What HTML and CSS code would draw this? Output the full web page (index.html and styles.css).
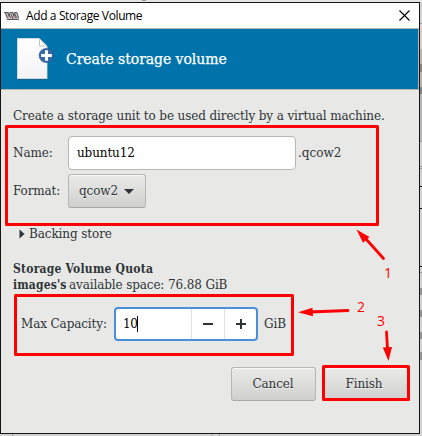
FILE: index.html
```html
<!DOCTYPE html>
<html lang="en">
<head>
<meta charset="utf-8">
<title>Add a Storage Volume</title>
<link rel="stylesheet" href="styles.css">
</head>
<body>
<svg class="backdrop" viewBox="0 0 422 436" aria-hidden="true">
  <rect width="422" height="436" fill="#d2d2d2"/>
  <rect width="422" height="2" fill="#e4e4e4"/>
  <rect x="142" y="0" width="4" height="1" fill="#999"/>
  <path d="M420 23.500h2M420 141.500h2M420 166.500h2M420 168.500h2M420 272.500h2M12.500 434v2M212 434v2M219.500 434v2" stroke="#999"/>
  <path d="M420 49h2v92h-2z" fill="#b4b4b4"/>
  <path d="M420 186.500h2M420 208.500h2M420 266.500h2" stroke="#111"/>
  <path d="M421 64v8M421 87v7M421 288v7M421 310v7M421 332v7M421 352v8" stroke="#555"/>
</svg>
<main class="window">
  <header class="titlebar">
    <svg class="app-icon" width="15" height="8" viewBox="0 0 15 8">
      <path d="M0 0h13l2 8H3z" fill="#bbb"/>
      <path d="M0 .5h4l1 4 1-4h3l1 4 1-4h2l2 6M3 7.500h12M1.500 1l2 5M7 2l2 5M10 1l3 5" fill="none" stroke="#555054" stroke-width=".9"/>
      <path d="M5 3l2 3M10 4l2 2" stroke="#955"/>
    </svg>
    <span class="window-title">Add a Storage Volume</span>
    <svg class="close" width="11" height="11" viewBox="0 0 11 11"><path d="M.5.5l10 10M10.500.5l-10 10" stroke="#000" stroke-width="1.100"/></svg>
  </header>
  <section class="banner">
    <svg class="doc-icon" width="40" height="44" viewBox="0 0 40 44">
      <defs><linearGradient id="paper" x2="0" y2="1"><stop stop-color="#fff"/><stop offset="1" stop-color="#f3f3f3"/></linearGradient></defs>
      <path d="M2 2.500h22l7 7V43H2z" fill="#16547c" opacity=".5"/>
      <path d="M1.500 1.500h22l7.500 7.500v32.500H1.500z" fill="url(#paper)" stroke="#e5e5e2" stroke-width=".8"/>
      <path d="M23.500 1.500v7.500H31z" fill="#fff" stroke="#b6b6b3" stroke-width=".8"/>
      <circle cx="30.200" cy="18.500" r="7.100" fill="#3b67a6" stroke="#2d5692" stroke-width=".6"/>
      <path d="M30.500 13.200v10.600M25.200 18.500h10.600" stroke="#fff" stroke-width="2.900"/>
    </svg>
    <h1>Create storage volume</h1>
  </section>
  <section class="content">
    <p class="description">Create a storage unit to be used directly by a virtual machine.</p>
    <div class="row name-row"><span class="name-label">Name:</span><div class="input"><span class="value">ubuntu12</span></div><span class="suffix">.qcow2</span></div>
    <div class="row format-row"><span class="format-label">Format:</span><div class="button select"><span class="option">qcow2</span><svg width="10" height="5" viewBox="0 0 10 5"><path d="M0 0h10L5 5z" fill="#2e3436"/></svg></div></div>
    <div class="expander"><svg width="6" height="10" viewBox="0 0 6 10"><path d="M.5.5L5.500 5 .5 9.500z" fill="#2e3436"/></svg><span>Backing store</span></div>
    <p class="quota">Storage Volume Quota</p>
    <p class="available"><b>images's</b><span>available space: 76.88 GiB</span></p>
    <div class="row capacity-row"><span class="capacity-label">Max Capacity:</span>
      <div class="spin"><div class="number"><span>10</span><i></i></div><div class="step minus"><svg width="12" height="12" viewBox="0 0 12 12"><path d="M1 6h10" stroke="#2e3436" stroke-width="2"/></svg></div><div class="step"><svg width="12" height="12" viewBox="0 0 12 12"><path d="M1 6h10M6 1v10" stroke="#2e3436" stroke-width="2"/></svg></div></div><span class="unit">GiB</span></div>
    <footer><div class="button action"><span>Cancel</span></div><div class="button action finish"><span>Finish</span></div></footer>
  </section>
</main>
<svg class="annotations" viewBox="0 0 422 436">
  <g fill="none" stroke="#f00" stroke-width="3" stroke-linejoin="round">
    <rect x="6.500" y="126.500" width="371" height="98"/>
    <rect x="15.500" y="295.500" width="277" height="59"/>
    <rect x="323.500" y="366.500" width="85" height="33"/>
    <path d="M383.500 258.500L366 239M348 310.500L309 312M386.500 332l1 17" stroke-width="2.800" stroke-linecap="round"/>
  </g>
  <path d="M356.500 229.500l13 7.500-6.500 5.700zM298 312.300l14.500-4.500.5 8.500zM388.500 361l-5.700-13.500 9.200-.5z" fill="#f00"/>
  <g class="numbers"><text x="384" y="278">1</text><text x="357" y="312">2</text><text x="377" y="326">3</text></g>
</svg>
</body>
</html>
```
FILE: styles.css
```css
* { box-sizing: border-box; }
body { margin: 0; width: 422px; height: 436px; overflow: hidden; padding-top: 2px; position: relative; font: 12px/16px "DejaVu Serif", serif; letter-spacing: -.12px; color: #2e3436; }
p, h1 { margin: 0; }
svg { display: block; flex: none; }
span, b { white-space: nowrap; }
.backdrop, .annotations { position: absolute; left: 0; top: 0; width: 422px; height: 436px; }
.backdrop { z-index: -1; }
.window { width: 420px; height: 432px; border: 1px solid #151515; background: #e8e8e7; }
.titlebar { height: 25px; background: #fff; display: flex; align-items: center; padding: 0 9px 0 3px; font: 12px/16px "Open Sans", sans-serif; letter-spacing: -.38px; color: #000; }
.window-title { margin-left: 7px; }
.close { margin-left: auto; }
.banner { height: 62px; border: 1px solid #b6b6b3; border-left: 0; background: #0073aa; display: flex; padding: 8px 0 0 15px; color: #fff; }
h1 { font-size: 14px; line-height: 20px; font-weight: 400; margin: 12px 0 0 10px; white-space: nowrap; -webkit-text-stroke: .25px #fff; letter-spacing: -.05px; }
.content { padding-left: 12px; }
.description { height: 16px; margin-top: 18px; white-space: nowrap; }
.row { display: flex; align-items: center; height: 34px; }
.name-row { margin-top: 12px; }
.name-label, .format-label { width: 55px; flex: none; }
.input { width: 228px; height: 34px; border: 1px solid #b6b6b3; border-radius: 4px; background: #fff; color: #000; padding: 8px; }
.suffix { margin-left: 2px; letter-spacing: 0; }
.format-row { margin-top: 4px; }
.button { height: 34px; border: 1px solid #b6b6b3; border-bottom-color: #a8a8a5; border-radius: 3px; background: linear-gradient(#eaeae9, #d0d0ce); box-shadow: inset 0 1px #f7f7f6; display: flex; align-items: center; justify-content: center; text-shadow: 0 1px #fff9; }
.select { width: 78px; justify-content: space-between; padding: 0 11px 0 10px; }
.expander { display: flex; align-items: center; height: 16px; margin: 18px 0 0 6px; gap: 4px; letter-spacing: -.1px; }
.quota { height: 16px; margin-top: 19px; font-family: "DejaVu Serif Condensed", "DejaVu Serif", serif; font-stretch: condensed; font-weight: 700; white-space: nowrap; letter-spacing: .22px; }
.available { display: flex; height: 16px; }
.available b { width: 56px; font-family: "DejaVu Serif Condensed", "DejaVu Serif", serif; font-stretch: condensed; letter-spacing: .15px; }
.capacity-row { margin: 14px 0 0 8px; }
.capacity-label { width: 93px; }
.spin { display: flex; width: 144px; height: 34px; border: 2px solid #4a90d9; border-radius: 4px; background: #fff; color: #000; }
.number { width: 75px; display: flex; align-items: center; padding-left: 7px; letter-spacing: -.5px; }
.number i { width: 1px; height: 16px; background: #000; }
.step { flex: 1; border-left: 1px solid #e2e2e2; display: flex; align-items: center; justify-content: center; }
.minus { flex: 0 0 33px; }
.unit { margin-left: 6px; }
footer { display: flex; justify-content: flex-end; gap: 7px; padding-right: 11px; margin-top: 26px; }
.action { width: 85px; padding-right: 1px; }
.finish { padding-right: 3px; }
.numbers { font: 14px "Open Sans", sans-serif; letter-spacing: 0; fill: #f00; }
```
